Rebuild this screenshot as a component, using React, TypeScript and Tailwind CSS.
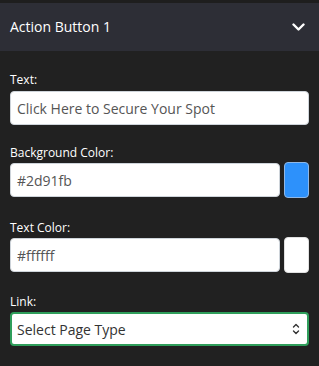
import React from "react";

export default function App() {
  const font = { fontFamily: '"Open Sans", "Noto Sans", sans-serif' };
  return (
    <div className="w-[319px] h-[366px] bg-[#212121] overflow-hidden" style={font}>
      <div className="h-[3px] bg-[#1e1e1e]" />
      <div className="h-[48px] bg-[#2d2e36] flex items-center justify-between pl-[10px] pr-[14px]">
        <span className="text-white text-[14px] leading-none">Action Button 1</span>
        <svg width="13" height="9" viewBox="0 0 13 9" fill="none">
          <path d="M1.5 1.5 L6.5 6.5 L11.5 1.5" stroke="#ffffff" strokeWidth="2.4" strokeLinecap="round" strokeLinejoin="round" />
        </svg>
      </div>
      <div className="px-[10px] pt-[21px] flex flex-col">
        <label className="text-white text-[12px] leading-[16px]">Text:</label>
        <div className="mt-[3px] h-[34px] bg-white rounded-[4px] border border-[#ced4da] flex items-center px-[6px]">
          <span className="text-[#555555] text-[14px]">Click Here to Secure Your Spot</span>
        </div>

        <label className="mt-[20px] text-white text-[12px] leading-[16px]">Background Color:</label>
        <div className="mt-[2px] flex gap-[4px]">
          <div className="flex-1 h-[34px] bg-white rounded-[4px] border border-[#ced4da] flex items-center px-[6px]">
            <span className="text-[#555555] text-[14px]">#2d91fb</span>
          </div>
          <div className="w-[25px] h-[36px] -mt-[1px] rounded-[4px] bg-[#2d91fb] border border-[#8fb7e6]" />
        </div>

        <label className="mt-[22px] text-white text-[12px] leading-[16px]">Text Color:</label>
        <div className="mt-[2px] flex gap-[4px]">
          <div className="flex-1 h-[34px] bg-white rounded-[4px] border border-[#ced4da] flex items-center px-[6px]">
            <span className="text-[#555555] text-[14px]">#ffffff</span>
          </div>
          <div className="w-[25px] h-[36px] -mt-[1px] rounded-[4px] bg-white border border-[#e0e0e0]" />
        </div>

        <label className="mt-[21px] text-white text-[12px] leading-[16px]">Link:</label>
        <div className="mt-[2px] h-[34px] bg-white rounded-[4px] border-2 border-[#2f9e5b] flex items-center justify-between pl-[5px] pr-[7px]">
          <span className="text-[#333333] text-[14px]">Select Page Type</span>
          <svg width="8" height="14" viewBox="0 0 8 14" fill="none">
            <path d="M1.5 5 L4 2.5 L6.5 5" stroke="#333" strokeWidth="1.4" strokeLinecap="round" strokeLinejoin="round" />
            <path d="M1.5 9 L4 11.5 L6.5 9" stroke="#333" strokeWidth="1.4" strokeLinecap="round" strokeLinejoin="round" />
          </svg>
        </div>
      </div>
    </div>
  );
}
